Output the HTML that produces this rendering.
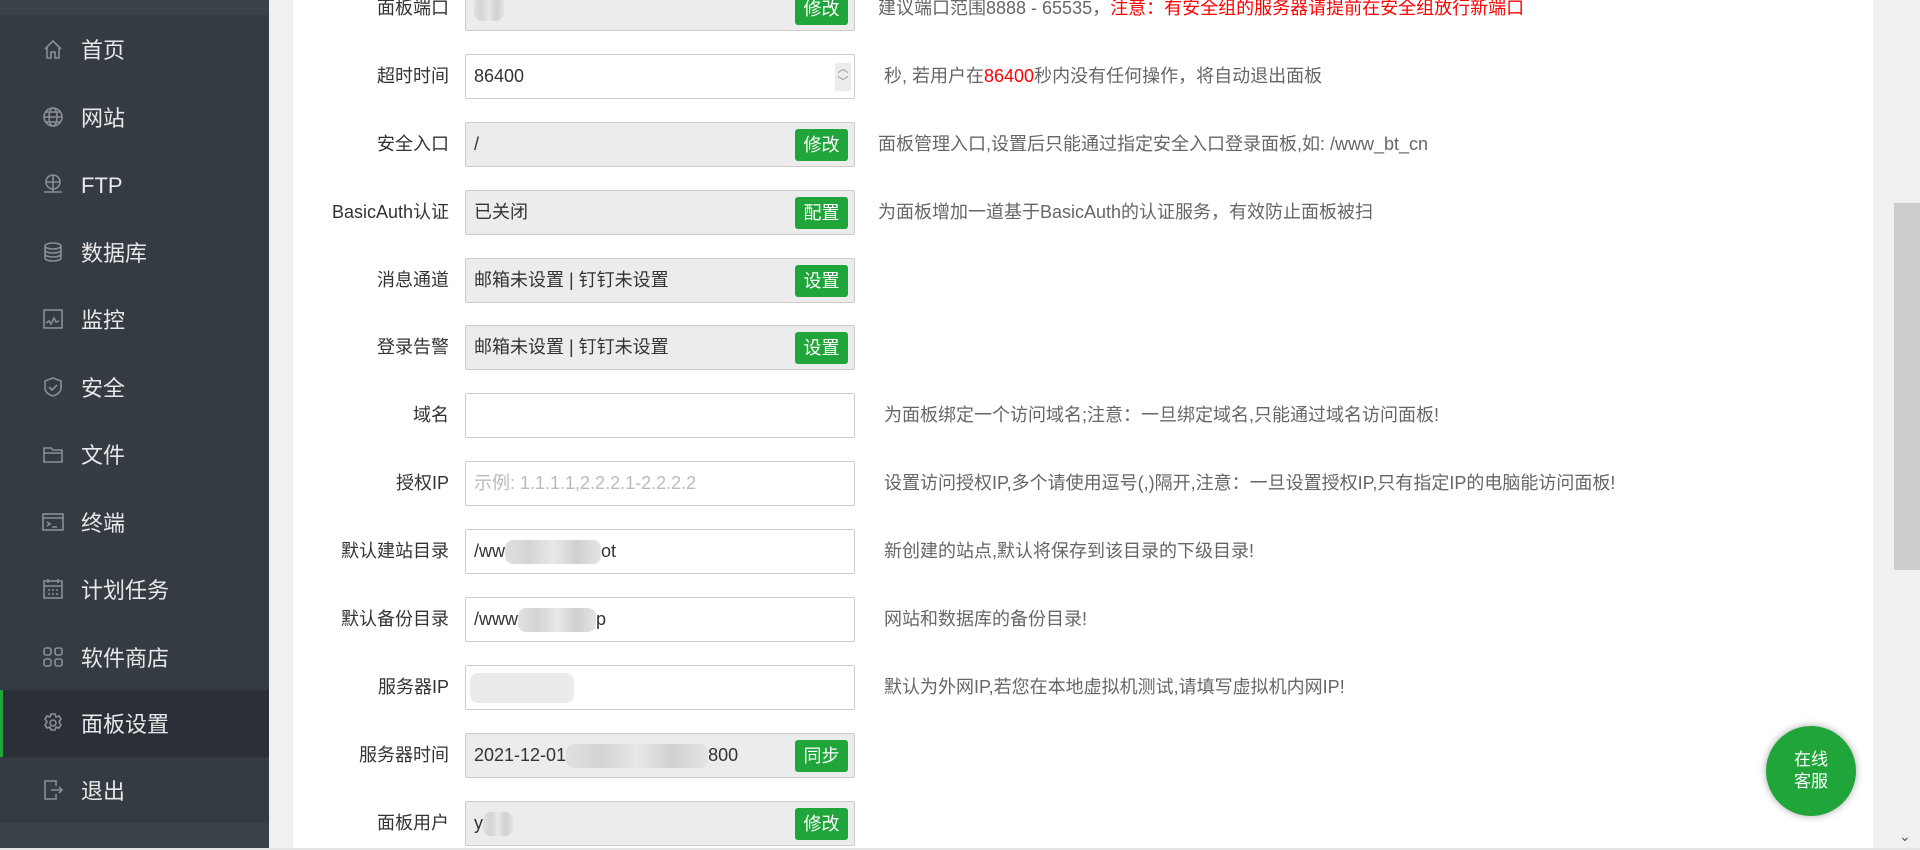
<!DOCTYPE html>
<html><head><meta charset="utf-8">
<style>
*{margin:0;padding:0;box-sizing:border-box}
body{width:1920px;height:850px;overflow:hidden;background:#f0f0f0;font-family:"Liberation Sans","Noto Sans CJK SC",sans-serif;position:relative}
#side{position:absolute;left:0;top:0;width:269px;height:848px;background:#353b43}
#side .top{position:absolute;left:0;top:0;width:269px;height:15px;background:#3c424a}
#side .bot{position:absolute;left:0;top:823px;width:269px;height:25px;background:#3c424a}
.nav{position:absolute;left:0;width:269px;height:67px;color:#e8e8e8;font-size:22px;line-height:67px}
.nav span{position:absolute;left:81px;top:1px}
.nav svg{position:absolute;left:42px;top:22px;width:22px;height:22px;fill:none;stroke:#8a8f95;stroke-width:1.6}
.nav.act{background:#2b3038;border-left:3px solid #20a53a}
.nav.act svg{left:39px}.nav.act span{left:78px}
#main{position:absolute;left:293px;top:0;width:1580px;height:848px;background:#fff}
.row{position:absolute;left:0;width:1580px;height:45px}
.row .lab{position:absolute;left:0;width:156px;text-align:right;font-size:18px;color:#333;line-height:45px}
.inp{position:absolute;left:172px;top:0;width:390px;height:45px;border:1px solid #ccc;border-radius:2px;background:#fff;font-size:18px;color:#333;line-height:43px;padding-left:8px;white-space:nowrap}
.inp.ro{background:#ececec}
.btn{position:absolute;right:6px;top:6px;width:53px;height:32px;background:#20a53a;color:#fff;border-radius:3px;font-size:18px;line-height:32px;text-align:center}
.desc{position:absolute;left:585px;line-height:45px;font-size:18px;color:#666;white-space:nowrap}
.red{color:#f00}
.blur{display:inline-block;vertical-align:middle;height:24px;background:linear-gradient(90deg,#e0e0e0,#d4d4d4,#e8e8e8,#d0d0d0,#e4e4e4);border-radius:8px}
#sb{position:absolute;left:1894px;top:0;width:26px;height:848px;background:#f0f0f0}
#thumb{position:absolute;left:1894px;top:203px;width:26px;height:367px;background:#cdcdcd}
#kf{position:absolute;left:1766px;top:726px;width:90px;height:90px;border-radius:50%;background:#20a53a;box-shadow:0 0 8px rgba(0,0,0,.35);color:#fff;font-size:17px;text-align:center;line-height:22px;padding-top:23px}
#bl{position:absolute;left:0;top:848px;width:1920px;height:2px;background:#e4e4e4}
</style></head><body>
<div id="side">
<div class="top"></div>
<div class="nav" style="top:16px"><svg viewBox="0 0 22 22"><path d="M3 11L11 3l8 8M5 9v11h4v-6h4v6h4V9"/></svg><span>首页</span></div>
<div class="nav" style="top:84px"><svg viewBox="0 0 22 22"><circle cx="11" cy="11" r="9"/><ellipse cx="11" cy="11" rx="4" ry="9"/><path d="M2 11h18M4 6h14M4 16h14"/></svg><span>网站</span></div>
<div class="nav" style="top:151px"><svg viewBox="0 0 22 22"><circle cx="11" cy="9" r="7"/><path d="M4 9h14M11 2v14M2 19h18M11 16v3"/></svg><span>FTP</span></div>
<div class="nav" style="top:219px"><svg viewBox="0 0 22 22"><ellipse cx="11" cy="5" rx="8" ry="3"/><path d="M3 5v12c0 2 4 3 8 3s8-1 8-3V5M3 9c0 2 4 3 8 3s8-1 8-3M3 13c0 2 4 3 8 3s8-1 8-3"/></svg><span>数据库</span></div>
<div class="nav" style="top:286px"><svg viewBox="0 0 22 22"><rect x="2" y="2" width="18" height="18"/><path d="M4 15l3-2 2 3 3-6 2 4 3-1"/></svg><span>监控</span></div>
<div class="nav" style="top:354px"><svg viewBox="0 0 22 22"><path d="M11 2l8 3v7c0 4-4 7-8 8-4-1-8-4-8-8V5z"/><path d="M7 11l3 3 5-5"/></svg><span>安全</span></div>
<div class="nav" style="top:421px"><svg viewBox="0 0 22 22"><path d="M2 5h7l2 2h9v12H2z M2 10h18"/></svg><span>文件</span></div>
<div class="nav" style="top:489px"><svg viewBox="0 0 22 22"><rect x="1" y="3" width="20" height="16"/><path d="M1 7h20M5 11l3 2-3 2M10 16h5"/></svg><span>终端</span></div>
<div class="nav" style="top:556px"><svg viewBox="0 0 22 22"><rect x="2" y="3" width="18" height="17"/><path d="M2 8h18M6 1v4M16 1v4M6 12h2M10 12h2M14 12h2M6 16h2M10 16h2M14 16h2"/></svg><span>计划任务</span></div>
<div class="nav" style="top:624px"><svg viewBox="0 0 22 22"><rect x="2" y="2" width="7" height="7" rx="2"/><rect x="13" y="2" width="7" height="7" rx="2"/><rect x="2" y="13" width="7" height="7" rx="2"/><rect x="13" y="13" width="7" height="7" rx="2"/></svg><span>软件商店</span></div>
<div class="nav act" style="top:690px"><svg viewBox="0 0 22 22"><circle cx="11" cy="11" r="3"/><path d="M9 2h4l1 3 3-1 2 3-2 3 2 3-2 3-3-1-1 3H9l-1-3-3 1-2-3 2-3-2-3 2-3 3 1z"/></svg><span>面板设置</span></div>
<div class="nav" style="top:757px"><svg viewBox="0 0 22 22"><path d="M14 7V2H3v18h11v-5M9 11h11M17 8l3 3-3 3"/></svg><span>退出</span></div>
<div class="bot"></div>
</div>
<div id="main">
<div class="row" style="top:-14px"><div class="lab">面板端口</div><div class="inp ro"><span class="blur" style="width:30px"></span><div class="btn">修改</div></div><div class="desc">建议端口范围8888 - 65535，<span class="red">注意：有安全组的服务器请提前在安全组放行新端口</span></div></div>
<div class="row" style="top:54px"><div class="lab">超时时间</div><div class="inp">86400<div style="position:absolute;right:3px;top:8px;width:16px;height:28px;background:#ececec;color:#888;font-size:11px;line-height:13px;text-align:center">︿<br>﹀</div></div><div class="desc" style="left:591px">秒, 若用户在<span class="red">86400</span>秒内没有任何操作，将自动退出面板</div></div>
<div class="row" style="top:122px"><div class="lab">安全入口</div><div class="inp ro">/<div class="btn">修改</div></div><div class="desc">面板管理入口,设置后只能通过指定安全入口登录面板,如: /www_bt_cn</div></div>
<div class="row" style="top:190px"><div class="lab">BasicAuth认证</div><div class="inp ro">已关闭<div class="btn">配置</div></div><div class="desc">为面板增加一道基于BasicAuth的认证服务，有效防止面板被扫</div></div>
<div class="row" style="top:258px"><div class="lab">消息通道</div><div class="inp ro">邮箱未设置 | 钉钉未设置<div class="btn">设置</div></div></div>
<div class="row" style="top:325px"><div class="lab">登录告警</div><div class="inp ro">邮箱未设置 | 钉钉未设置<div class="btn">设置</div></div></div>
<div class="row" style="top:393px"><div class="lab">域名</div><div class="inp"></div><div class="desc" style="left:591px">为面板绑定一个访问域名;注意：一旦绑定域名,只能通过域名访问面板!</div></div>
<div class="row" style="top:461px"><div class="lab">授权IP</div><div class="inp" style="color:#bbb">示例: 1.1.1.1,2.2.2.1-2.2.2.2</div><div class="desc" style="left:591px">设置访问授权IP,多个请使用逗号(,)隔开,注意：一旦设置授权IP,只有指定IP的电脑能访问面板!</div></div>
<div class="row" style="top:529px"><div class="lab">默认建站目录</div><div class="inp">/ww<span class="blur" style="width:96px"></span>ot</div><div class="desc" style="left:591px">新创建的站点,默认将保存到该目录的下级目录!</div></div>
<div class="row" style="top:597px"><div class="lab">默认备份目录</div><div class="inp">/www<span class="blur" style="width:78px"></span>p</div><div class="desc" style="left:591px">网站和数据库的备份目录!</div></div>
<div class="row" style="top:665px"><div class="lab">服务器IP</div><div class="inp" style="padding-left:4px"><span class="blur" style="width:104px;height:30px;background:#ebebeb"></span></div><div class="desc" style="left:591px">默认为外网IP,若您在本地虚拟机测试,请填写虚拟机内网IP!</div></div>
<div class="row" style="top:733px"><div class="lab">服务器时间</div><div class="inp ro">2021-12-01<span class="blur" style="width:142px"></span>800<div class="btn">同步</div></div></div>
<div class="row" style="top:801px"><div class="lab">面板用户</div><div class="inp ro">y<span class="blur" style="width:30px"></span><div class="btn">修改</div></div></div>
</div>
<div id="sb"></div><div id="thumb"></div>
<div style="position:absolute;left:1899px;top:828px;color:#555;font-size:14px">⌄</div>
<div id="kf">在线<br>客服</div>
<div id="bl"></div>
</body></html>
